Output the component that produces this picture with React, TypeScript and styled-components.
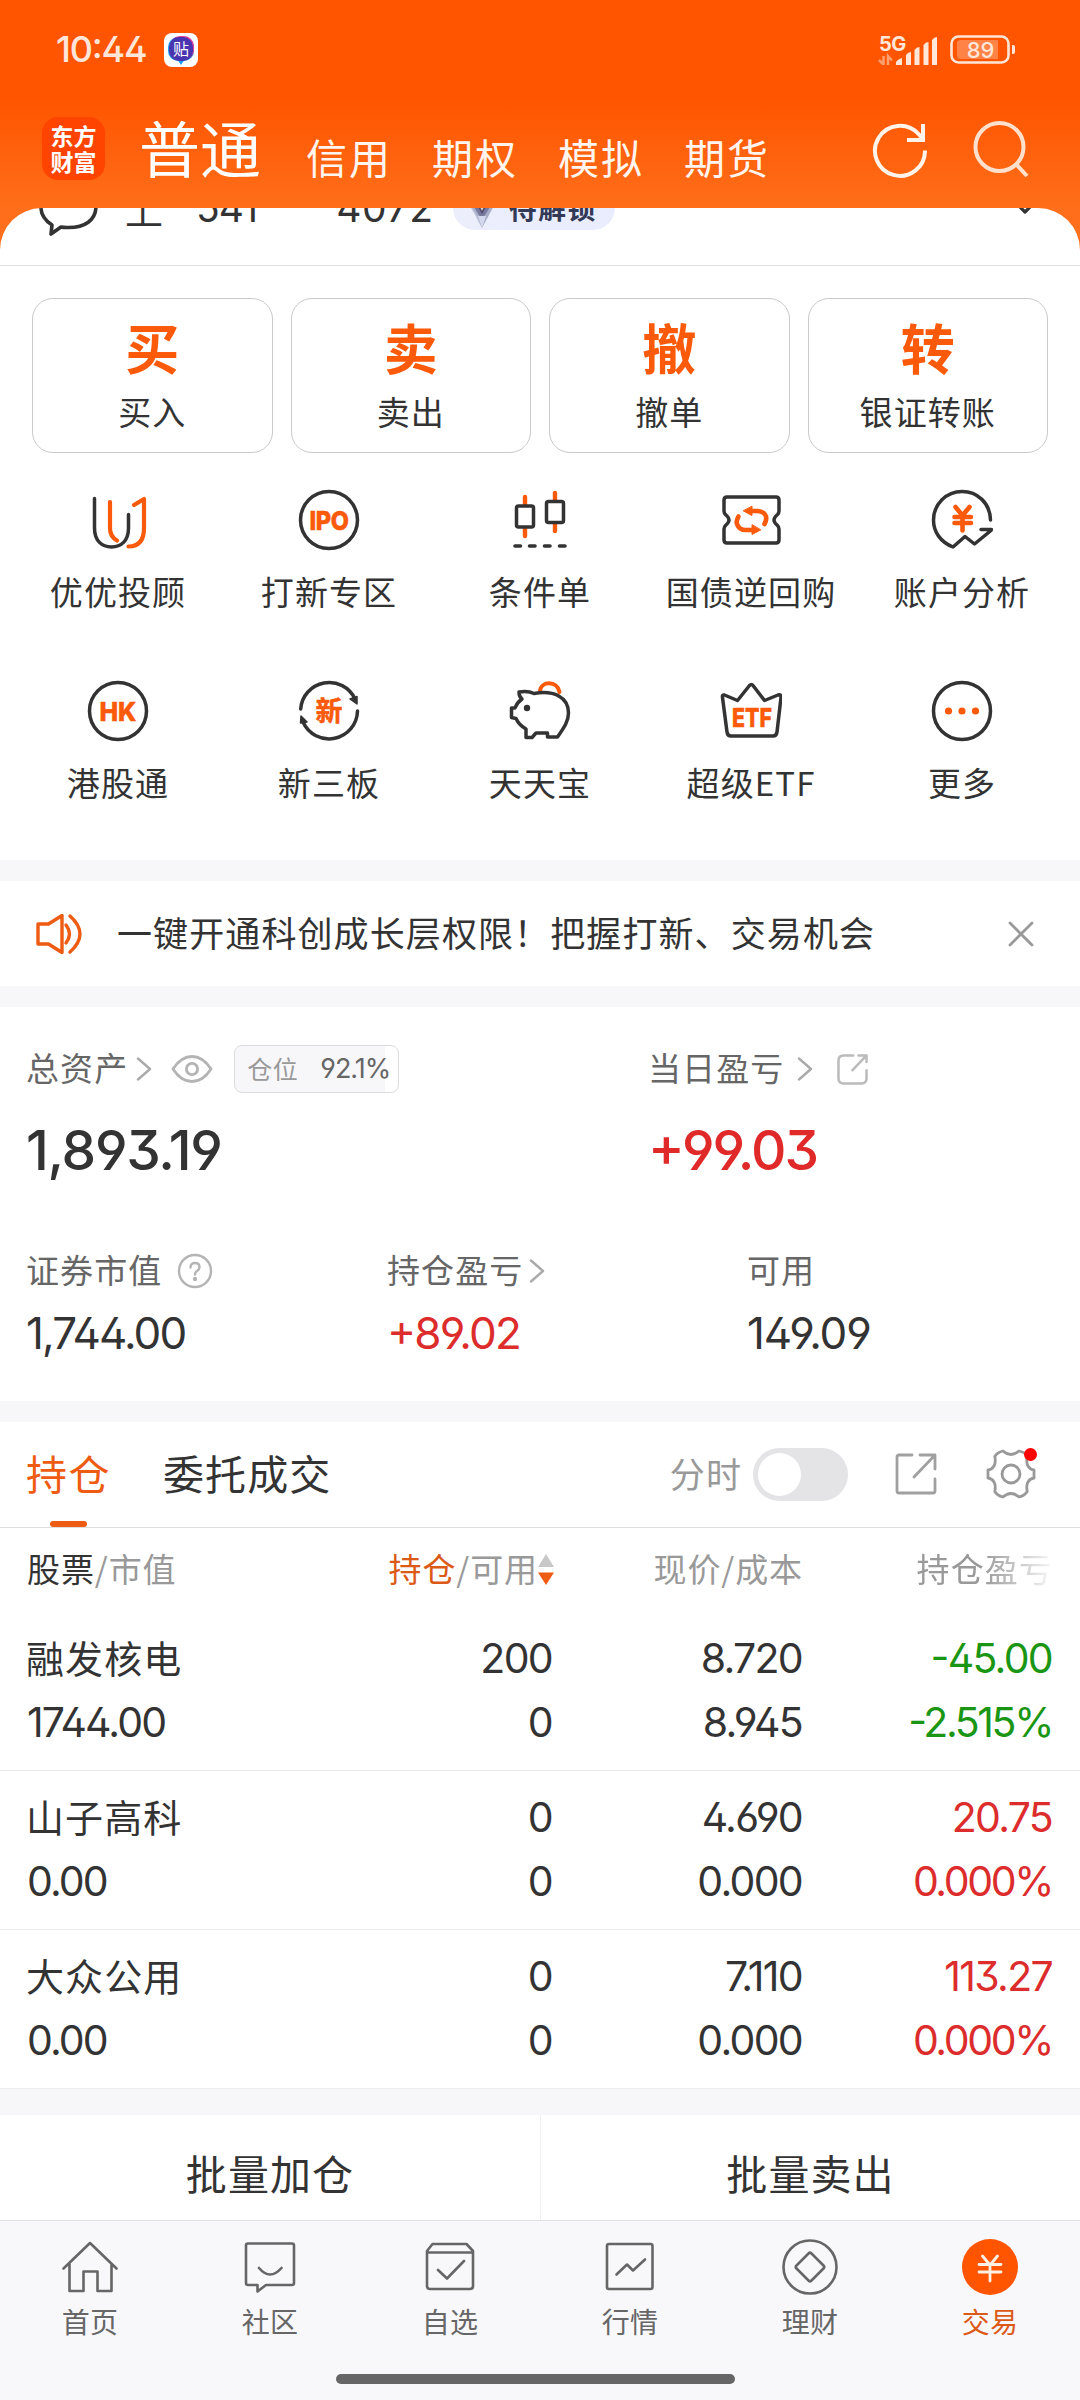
import React from "react";
import styled, { createGlobalStyle } from "styled-components";

const INK = "#333333";
const SUB = "#666666";
const MUTED = "#999999";
const ORANGE = "#fa5a0a";
const BRAND = "#ff5500";
const RED = "#dc2c2c";
const GREEN = "#1a9614";
const STRIP = "#f7f7fa";

const cjk = `"Noto Sans CJK SC", sans-serif`;
const num = `Inter, "Noto Sans CJK SC", sans-serif`;

const Global = createGlobalStyle`
  * { box-sizing: border-box; }
  body { margin: 0; background: #fff; font-family: ${cjk}; color: ${INK}; }
  svg { display: block; flex: none; }
`;

const Screen = styled.div`
  width: 1080px;
  height: 2400px;
  overflow: hidden;
  display: flex;
  flex-direction: column;
  background: #fff;
`;

/* ---------- text primitives ---------- */

const Text = styled.span<{ $size?: number; $color?: string; $weight?: number; $track?: number }>`
  display: block;
  font-family: ${cjk};
  font-size: ${(p) => p.$size ?? 33}px;
  line-height: 1.2;
  font-weight: ${(p) => p.$weight ?? 400};
  letter-spacing: ${(p) => p.$track ?? 1.1}px;
  color: ${(p) => p.$color ?? INK};
  white-space: nowrap;
`;

const Num = styled.span<{ $size?: number; $color?: string; $weight?: number; $track?: number }>`
  display: block;
  font-family: ${num};
  font-feature-settings: "ss01", "cv09", "case";
  font-size: ${(p) => p.$size ?? 41}px;
  line-height: 1.2;
  font-weight: ${(p) => p.$weight ?? 400};
  letter-spacing: ${(p) => p.$track ?? -1.7}px;
  color: ${(p) => p.$color ?? INK};
  white-space: nowrap;
`;

/* ---------- header ---------- */

const Header = styled.header`
  height: 250px;
  flex: none;
  background: linear-gradient(180deg, ${BRAND} 0, ${BRAND} 100px, #ff6e1a 208px, #ff6e1a 250px);
`;

const StatusBar = styled.div`
  height: 100px;
  padding: 0 64px 0 56px;
  display: flex;
  align-items: center;
  justify-content: space-between;
`;

const Cluster = styled.div<{ $gap?: number }>`
  display: flex;
  align-items: center;
  gap: ${(p) => p.$gap ?? 0}px;
`;

const TitleBar = styled.nav`
  height: 108px;
  padding: 0 50px 0 42px;
  display: flex;
  align-items: flex-start;
`;

const Logo = styled.div`
  margin-top: 17px;
  width: 63px;
  height: 63px;
  border-radius: 16px;
  background: #ff4400;
  color: #fff;
  display: flex;
  flex-direction: column;
  align-items: center;
  justify-content: center;
  font-family: "Noto Sans CJK SC", sans-serif;
  font-weight: 700;
  font-size: 23px;
  line-height: 26px;
  padding-bottom: 2px;
`;

const MainTitle = styled(Text)`
  margin: 7px 0 0 34px;
  line-height: 80px;
`;

const Tabs = styled.div`
  display: flex;
  gap: 40px;
  margin: 32px 0 0 45px;
  line-height: 50px;
`;

const HeaderIcons = styled.div`
  display: flex;
  gap: 43px;
  margin: 21px 0 0 auto;
`;

/* ---------- sheet ---------- */

const Sheet = styled.main`
  position: relative;
  margin-top: -42px;
  background: #fff;
  border-radius: 42px 42px 0 0;
  overflow: hidden;
  flex: none;
`;

const PeekClip = styled.div`
  height: 58px;
  overflow: hidden;
  display: flex;
  align-items: flex-end;
  border-bottom: 1px solid #e2e2e4;
`;

const PeekRow = styled.div`
  height: 114px;
  width: 100%;
  flex: none;
  padding: 0 42px 0 39px;
  display: flex;
  align-items: center;
`;

const Badge = styled.div`
  margin-left: 19px;
  width: 162px;
  height: 44px;
  border-radius: 22px;
  background: linear-gradient(90deg, #eceefb, #e9edff);
  display: flex;
  align-items: center;
  gap: 9px;
  padding-left: 11px;
`;

const Push = styled.div`
  margin-left: auto;
`;

const Cards = styled.section`
  display: grid;
  grid-template-columns: repeat(4, 1fr);
  gap: 18px;
  padding: 32px 32px 0;
`;

const Card = styled.div`
  height: 155px;
  border: 1px solid #cacacc;
  border-radius: 21px;
  display: flex;
  flex-direction: column;
  align-items: center;
  padding-top: 17px;
`;

const CardGlyph = styled(Text)`
  line-height: 62px;
`;

const CardLabel = styled(Text)`
  line-height: 40px;
  margin-top: 13px;
`;

const Features = styled.section`
  display: grid;
  grid-template-columns: repeat(5, 211px);
  justify-content: center;
  row-gap: 69px;
  padding: 36px 0 58px;
`;

const Feature = styled.div`
  display: flex;
  flex-direction: column;
  align-items: center;
  gap: 20px;
`;

const FeatureLabel = styled(Text)`
  line-height: 40px;
`;

const Strip = styled.div<{ $h?: number }>`
  height: ${(p) => p.$h ?? 21}px;
  background: ${STRIP};
  flex: none;
`;

const Notice = styled.section`
  height: 105px;
  display: flex;
  align-items: center;
  padding: 0 46px 0 35px;
`;

const NoticeText = styled(Text)`
  margin: -4px auto 0 34px;
`;

/* ---------- assets ---------- */

const Assets = styled.section`
  height: 394px;
  padding: 37px 26px 0;
`;

const AssetsTop = styled.div`
  display: grid;
  grid-template-columns: 622px 1fr;
`;

const AssetsBottom = styled.div`
  display: grid;
  grid-template-columns: 361px 360px 1fr;
  margin-top: 63px;
`;

const LabelRow = styled.div<{ $h: number }>`
  height: ${(p) => p.$h}px;
  display: flex;
  align-items: center;
`;

const Label = styled(Text)`
  margin-top: -3px;
`;

const Gap = styled.i<{ $w: number }>`
  width: ${(p) => p.$w}px;
  flex: none;
`;

const Position = styled.div`
  width: 165px;
  height: 48px;
  border: 1px solid #dcdcde;
  border-radius: 8px;
  background: linear-gradient(90deg, ${STRIP} 92.1%, #fff 92.1%);
  display: flex;
  align-items: center;
  justify-content: space-between;
  padding: 0 8px 0 12px;
`;

const BigValue = styled(Num)`
  line-height: 66px;
  margin-top: 23px;
`;

const Value = styled(Num)`
  line-height: 54px;
  margin-top: 10px;
`;

/* ---------- holdings ---------- */

const HoldingTabs = styled.section`
  height: 106px;
  border-bottom: 1px solid #dedee0;
  padding: 0 44px 0 26px;
  display: flex;
  align-items: stretch;
`;

const HoldingTab = styled.div`
  display: flex;
  flex-direction: column;
  align-items: center;
  padding-top: 22px;
  line-height: 56px;
  margin-right: 52px;
`;

const TabText = styled(Text)`
  line-height: 56px;
`;

const Underline = styled.i`
  width: 37px;
  height: 6px;
  border-radius: 3px;
  background: #ee5b12;
  margin-top: auto;
`;

const Toggle = styled.div`
  width: 95px;
  height: 53px;
  border-radius: 27px;
  background: #e4e4e7;
  padding: 5px;
  margin-left: 11px;
  flex: none;
`;

const Knob = styled.div`
  width: 43px;
  height: 43px;
  border-radius: 50%;
  background: #fff;
`;

const GearBox = styled.div`
  position: relative;
  margin-left: 49px;
`;

const RedDot = styled.i`
  position: absolute;
  right: -1px;
  top: -1px;
  width: 13px;
  height: 13px;
  border-radius: 50%;
  background: #ff0000;
`;

const TableHead = styled.div`
  height: 84px;
  display: grid;
  grid-template-columns: 275px 250px 250px 250px;
  padding-left: 27px;
  align-items: center;
`;

const HeadCell = styled.div<{ $end?: boolean; $fade?: boolean; $out?: number }>`
  display: flex;
  align-items: center;
  justify-content: ${(p) => (p.$end ? "flex-end" : "flex-start")};
  margin-right: ${(p) => -(p.$out ?? 0)}px;
  ${(p) => p.$fade && "mask-image: linear-gradient(90deg, #000 72%, transparent 102%);"}
`;

const HeadText = styled(Text)`
  margin-top: -3px;
  & > em { font-style: normal; color: ${MUTED}; }
`;

const Row = styled.div`
  height: 159px;
  border-bottom: 1px solid #ececee;
  display: grid;
  grid-template-columns: 275px 250px 250px 250px;
  grid-template-rows: 64px 64px;
  padding: 15px 0 0 27px;
  align-items: center;
`;

const RowName = styled(Text)`
  margin: -5px 0 0 -1px;
`;

const Cell = styled(Num)`
  text-align: right;
`;

const Actions = styled.section`
  height: 105px;
  display: grid;
  grid-template-columns: 1fr 1fr;
`;

const Action = styled.div`
  display: flex;
  justify-content: center;
  padding-top: 33px;
  & + & { border-left: 1px solid #f0f0f2; }
`;

/* ---------- bottom nav ---------- */

const BottomNav = styled.footer`
  height: 184px;
  border-top: 1px solid #e0e0e2;
  background: #f8f8fb;
  display: flex;
  flex-direction: column;
  align-items: center;
`;

const NavItems = styled.div`
  width: 1080px;
  height: 153px;
  display: grid;
  grid-template-columns: repeat(6, 1fr);
`;

const NavItem = styled.div`
  display: flex;
  flex-direction: column;
  align-items: center;
  padding-top: 16px;
`;

const NavLabel = styled(Text)`
  line-height: 36px;
  margin-top: 6px;
`;

const HomeBar = styled.i`
  width: 399px;
  height: 10px;
  border-radius: 5px;
  background: #666;
  margin-right: 9px;
`;

/* ---------- icons ---------- */

const line = { fill: "none", strokeLinecap: "round", strokeLinejoin: "round" } as const;
const D = "#333";

const StatusApp = () => (
  <svg width="34" height="34" viewBox="0 0 34 34">
    <rect width="34" height="34" rx="8" fill="#fff" />
    <path d="M13 26l4 6 4-6z" fill="#18a0f0" />
    <rect x="4" y="4" width="26" height="24" rx="10" fill="#22a4f2" />
    <rect x="6" y="3" width="24" height="24" rx="10" fill="#e03c9a" />
    <rect x="5" y="4" width="24" height="24" rx="10" fill="#4a35b0" />
    <text x="17" y="22" fontSize="16" textAnchor="middle" fill="#fff" fontFamily={cjk}>贴</text>
  </svg>
);

const Signal = () => (
  <svg width="60" height="32" viewBox="0 0 60 32" overflow="visible">
    <text x="0" y="17" fontSize="20" fontWeight="700" letterSpacing="-0.5" fill="#ffe6d8" fontFamily="Inter, sans-serif">5G</text>
    <g fill="#ffe6d8">
      <path d="M17 31v-3q2-3 6-4v7zM27 31V21q2-3 5-3v13zM35.500 31V16q2-3 5-3v18zM44.500 31V11q2-3 5-3v23zM53 31V6q2-3 5-3v28z" />
    </g>
    <g stroke="#ffa070" strokeWidth="2.500" fill="none">
      <path d="M4.500 22v9M0 26l4.500 4.500M9 31v-9l4 4.500" />
    </g>
  </svg>
);

const Battery = () => (
  <svg width="66" height="30" viewBox="0 0 66 30">
    <rect x="1.500" y="1.500" width="57" height="26" rx="7" fill="none" stroke="#ffe6d8" strokeWidth="2.600" />
    <path d="M7 8q0-3 3-3h38v19H10q-3 0-3-3z" fill="#ff8347" />
    <path d="M62 10h1q2 0 2 2v5q0 2-2 2h-1z" fill="#ffe6d8" />
    <text x="30.500" y="22.500" fontSize="22" fontWeight="500" textAnchor="middle" fill="#ffe6d8" fontFamily="Inter, sans-serif">89</text>
  </svg>
);

const Refresh = () => (
  <svg width="58" height="58" viewBox="0 0 58 58" fill="none" stroke="#fff3ea" strokeWidth="4">
    <path d="M54 29.500A25 25 0 1 1 47.500 13L52 18" />
    <path d="M52 3v16H36" />
  </svg>
);

const Search = () => (
  <svg width="58" height="58" viewBox="0 0 58 58" fill="none" stroke="#ffe0cc" strokeWidth="4">
    <circle cx="27.500" cy="26" r="24" />
    <path d="M44 43l11 12" />
  </svg>
);

const Bubble = () => (
  <svg width="60" height="58" viewBox="0 0 60 58" {...line} stroke={D} strokeWidth="3.600">
    <path d="M13 46C5 41 1.800 34 1.800 27 1.800 13 14 3 29.500 3S57 13 57 27 46 49 28 48.500q-4 0-6-.5l-10 7z" />
  </svg>
);

const Gem = () => (
  <svg width="36" height="40" viewBox="0 0 36 40">
    <path d="M3 12L18 2l15 10-15 28z" fill="#a8adc8" />
    <path d="M7 14h22L18 32z" fill="#77799c" />
    <path d="M11 13h14l-7 13z" fill="#4b4668" />
    <path d="M14 15h8l-4 8z" fill="#d9cfc6" />
    <path d="M3 12l15 28-5-12z" fill="#c9cfe6" />
    <path d="M14 28h8l-4 12z" fill="#d3d8ee" />
  </svg>
);

const Chevron = ({ down }: { down?: boolean }) =>
  down ? (
    <svg width="26" height="18" viewBox="0 0 26 18" {...line} stroke={D} strokeWidth="3.200">
      <path d="M2 2l11 11L24 2" />
    </svg>
  ) : (
    <svg width="16" height="24" viewBox="0 0 16 24" {...line} stroke="#aaa" strokeWidth="2.400">
      <path d="M2 1.500L14 12 2 22.500" />
    </svg>
  );

const Icon = ({ children }: { children: React.ReactNode }) => (
  <svg width="62" height="62" viewBox="-1 -1 62 62" {...line} strokeWidth="3.500">{children}</svg>
);

const iconText = {
  textAnchor: "middle" as const,
  fill: ORANGE,
  stroke: ORANGE,
  strokeWidth: 0.5,
  fontWeight: 800,
  fontFamily: num,
};

const icons: Record<string, React.ReactNode> = {
  uu: (
    <Icon>
      <path stroke={D} d="M6.500 8.500V38c0 13 7.500 19 17 19s17-6 17-19V24.500" />
      <path stroke={ORANGE} strokeWidth="4.200" d="M22 12v26c0 6 2.500 10 7 12.500" />
      <path stroke={ORANGE} strokeWidth="4.200" d="M46 15l10-6v29c0 12-5 18.500-15.500 18.500" />
    </Icon>
  ),
  ipo: (
    <Icon>
      <circle cx="30" cy="30" r="28.500" stroke={D} />
      <text {...iconText} x="30" y="39.500" fontSize="26" letterSpacing="-0.5" textLength="39" lengthAdjust="spacingAndGlyphs">IPO</text>
    </Icon>
  ),
  cond: (
    <Icon>
      <g stroke={ORANGE} strokeWidth="4.400">
        <path d="M15 7v8M15 38v8M45 3v7M45 34v7" />
      </g>
      <rect x="6.500" y="16" width="17" height="21" rx="2" stroke={D} />
      <rect x="36.500" y="11.500" width="17" height="21" rx="2" stroke={D} />
      <path stroke={D} strokeWidth="3.600" d="M5 56h5.500M19.500 56H25M34.500 56H40M49.500 56H55" />
    </Icon>
  ),
  repo: (
    <Icon>
      <path stroke={D} d="M6 7h49q3 0 3 3v11q0 2-1.500 3.500-3.500 3-3.500 5.500t3.500 5.500Q58 37 58 39v11q0 3-3 3H6q-3 0-3-3V39q0-2 1.500-3.500Q8 32.500 8 30t-3.500-5.500Q3 23 3 21V10q0-3 3-3z" />
      <g stroke={ORANGE} strokeWidth="4.600">
        <path d="M17.500 26.500C13 34 18 40 24.500 40H32" />
        <path d="M43.500 34C48 26 43 21 36 21h-7" />
      </g>
      <g fill={ORANGE} stroke={ORANGE} strokeWidth="1">
        <path d="M31 35v9.500l8.500-4.500z" />
        <path d="M31 16.500v9l-8.500-4.500z" />
      </g>
    </Icon>
  ),
  yuan: (
    <Icon>
      <path stroke={D} d="M58.500 30C58 13 45.500 1.500 30 1.500S1.500 14 1.500 30c0 12 7 22 19.500 27L33 46.500l9.500 7.500L59 40.500l.5-1H49" />
      <path stroke={ORANGE} strokeWidth="4.600" d="M23.500 17L30.500 25.500 37.500 17M30.500 26v14.500M22.500 27h16.500M22.500 33h16.500" />
    </Icon>
  ),
  hk: (
    <Icon>
      <circle cx="30" cy="30" r="28.500" stroke={D} />
      <text {...iconText} x="30" y="39.500" fontSize="26" textLength="37" lengthAdjust="spacingAndGlyphs">HK</text>
    </Icon>
  ),
  xin: (
    <Icon>
      <path stroke={D} d="M1.700 28A28.500 28.500 0 0 1 56 18M58.500 30A28.500 28.500 0 0 1 4 41" />
      <path fill={D} stroke={D} strokeWidth="1.500" d="M51 18l7-2.500V23zM1.500 42l.5-7 6 6z" />
      <text {...iconText} x="30" y="40" fontSize="27" fontWeight="700" fontFamily={cjk}>新</text>
    </Icon>
  ),
  pig: (
    <Icon>
      <path stroke={ORANGE} strokeWidth="4" d="M30 10C31 0 47-1 49.500 11" />
      <path stroke={D} d="M9 11q9-1.500 15 1.500C44 9 58.500 16 58.500 32c0 8-4 14-11 24H37.500v-4H26l-4 4.500h-6V48Q9 44 6 37.500l-4.500-1V27H5q2-5.500 7-9Q9 16 9 11z" />
      <circle cx="17" cy="27" r="3.200" fill={D} />
    </Icon>
  ),
  etf: (
    <Icon>
      <path stroke={D} d="M3.500 14L16.500 19.500 28.500 4.500Q30.500 2.500 32 4.500L43.500 19.500 57 14Q60.500 13 60 16.500L56 51q-.5 4-4 4H10q-3.500 0-4-4L1.500 16.500Q1 13.500 3.500 14z" />
      <text {...iconText} x="31" y="46" fontSize="26" textLength="40" lengthAdjust="spacingAndGlyphs">ETF</text>
    </Icon>
  ),
  more: (
    <Icon>
      <circle cx="30" cy="30" r="28.500" stroke={D} />
      <g fill={ORANGE}>
        <circle cx="16.500" cy="30" r="3.600" />
        <circle cx="30" cy="30" r="3.600" />
        <circle cx="43.500" cy="30" r="3.600" />
      </g>
    </Icon>
  ),
};

const Speaker = () => (
  <svg width="48" height="42" viewBox="0 0 48 42" {...line} stroke="#ee5b12" strokeWidth="3.400">
    <path d="M3 11h10.500L27 2.500v37L13.500 31H3zM31 12q7 9 0 18M35 3q20 18 0 36" />
  </svg>
);

const Close = () => (
  <svg width="26" height="26" viewBox="0 0 26 26" {...line} stroke="#999" strokeWidth="2.800">
    <path d="M2 2l22 22M24 2L2 24" />
  </svg>
);

const Eye = () => (
  <svg width="42" height="28" viewBox="0 0 42 28" {...line} stroke="#b4b4b4" strokeWidth="2.800">
    <path d="M2 14Q10 1.500 21 1.500T40 14Q32 26.500 21 26.500T2 14z" />
    <circle cx="21" cy="14" r="5.600" />
  </svg>
);

const Share = ({ size, soft }: { size: number; soft?: boolean }) => (
  <svg width={size} height={size} viewBox="0 0 42 42" {...line} stroke={soft ? "#bbb" : "#a0a0a0"} strokeWidth={soft ? 3.4 : 2.8}>
    {soft ? (
      <path d="M22 2H9Q2 2 2 9v24q0 7 7 7h24q7 0 7-7V22M29 2h11v9M40 2L21 22" />
    ) : (
      <path d="M17 2H4Q2 2 2 4v34q0 2 2 2h34q2 0 2-2V26M25 2h15v14M40 2L19 24" />
    )}
  </svg>
);

const Help = () => (
  <svg width="36" height="36" viewBox="0 0 36 36" {...line} stroke="#b4b4b4" strokeWidth="2.400">
    <circle cx="18" cy="18" r="16" />
    <path d="M13.500 14.500q0-4.500 4.500-4.500t4.500 4.200q0 2.300-2.500 3.800-2 1.300-2 3.500" />
    <circle cx="18" cy="26" r="1" fill="#b4b4b4" />
  </svg>
);

const Gear = () => (
  <svg width="50" height="50" viewBox="0 0 50 50" {...line} stroke="#999" strokeWidth="2.800">
    <path d="M17 2Q21 5.500 25 5.500T33 2Q39.500 3.500 41.200 7 40 13.500 42 17t6 4v8q-4 .5-6 4t-.800 9.500Q39 46.500 33 48q-4-3.500-8-3.500T17 48q-6-1.500-8.200-5.500Q10 36.500 8 33T2 29v-8q4-.5 6-4t.8-9.500Q11 3.500 17 2z" />
    <circle cx="25" cy="25" r="9" />
  </svg>
);

const Sort = () => (
  <svg width="16" height="32" viewBox="0 0 16 32">
    <path d="M8 0l8 13H0z" fill="#c8c8c8" />
    <path d="M8 31l8-12.500H0z" fill="#ee5b12" />
  </svg>
);

const Nav = ({ children }: { children: React.ReactNode }) => (
  <svg width="60" height="60" viewBox="0 0 60 60" {...line} stroke="#666" strokeWidth="2.600">{children}</svg>
);

const navIcons: Record<string, React.ReactNode> = {
  首页: (
    <Nav>
      <path d="M3.500 31.500L30 6l26.500 25.500M9.500 27v27h14V34.500h14V54h14V27" />
    </Nav>
  ),
  社区: (
    <Nav>
      <path d="M8 6.500h44q2 0 2 2V46q0 2-2 2H26l-8.500 6.500V48H8q-2 0-2-2V8.500q0-2 2-2zM19 31q11 13 22.500 0" />
    </Nav>
  ),
  自选: (
    <Nav>
      <path d="M12.500 7h34L53 14v35q0 3-3 3H10q-3 0-3-3V14zM7.500 15.500h45M18 33l9 8.500L44 24" />
    </Nav>
  ),
  行情: (
    <Nav>
      <rect x="7" y="7" width="45.500" height="45" rx="2" />
      <path d="M16.500 37.500L27 27.500l6 6L45 22.500" />
    </Nav>
  ),
  理财: (
    <Nav>
      <circle cx="30" cy="30" r="26.500" />
      <path d="M28.500 16.500q1.500-1.500 3 0l12 12q1.500 1.500 0 3l-12 12q-1.500 1.500-3 0l-12-12q-1.500-1.500 0-3z" />
    </Nav>
  ),
  交易: (
    <Nav>
      <circle cx="30" cy="30" r="28" fill={BRAND} stroke="none" />
      <path stroke="#fff0e6" strokeWidth="2.800" d="M22.500 19L30 28l7.500-9M30 28v16M19 27.500h22M19 35h22" />
    </Nav>
  ),
};

/* ---------- data ---------- */

const quick = [
  ["买", "买入"],
  ["卖", "卖出"],
  ["撤", "撤单"],
  ["转", "银证转账"],
];

const features = [
  ["uu", "优优投顾"],
  ["ipo", "打新专区"],
  ["cond", "条件单"],
  ["repo", "国债逆回购"],
  ["yuan", "账户分析"],
  ["hk", "港股通"],
  ["xin", "新三板"],
  ["pig", "天天宝"],
  ["etf", "超级ETF"],
  ["more", "更多"],
];

const holdings = [
  { name: "融发核电", value: "1744.00", held: "200", free: "0", price: "8.720", cost: "8.945", gain: "-45.00", pct: "-2.515%", color: GREEN },
  { name: "山子高科", value: "0.00", held: "0", free: "0", price: "4.690", cost: "0.000", gain: "20.75", pct: "0.000%", color: RED },
  { name: "大众公用", value: "0.00", held: "0", free: "0", price: "7.110", cost: "0.000", gain: "113.27", pct: "0.000%", color: RED },
];

export default function App() {
  return (
    <Screen>
      <Global />
      <Header>
        <StatusBar>
          <Cluster $gap={18}>
            <Num $size={36} $color="#ffe6d8" $track={-1.2} $weight={500}>10:44</Num>
            <StatusApp />
          </Cluster>
          <Cluster $gap={11}>
            <Signal />
            <Battery />
          </Cluster>
        </StatusBar>
        <TitleBar>
          <Logo>
            <span>东方</span>
            <span>财富</span>
          </Logo>
          <MainTitle $size={61} $color="#fff" $track={0}>普通</MainTitle>
          <Tabs>
            {["信用", "期权", "模拟", "期货"].map((t) => (
              <Text key={t} $size={41} $color="#fff5ee" $track={2}>{t}</Text>
            ))}
          </Tabs>
          <HeaderIcons>
            <Refresh />
            <Search />
          </HeaderIcons>
        </TitleBar>
      </Header>

      <Sheet>
        <PeekClip>
          <PeekRow>
            <Bubble />
            <Gap $w={26} />
            <Text $size={38}>上</Text>
            <Gap $w={32} />
            <Num $size={39} $track={-1}>541</Num>
            <Gap $w={79} />
            <Num $size={39} $track={0.7}>4072</Num>
            <Badge>
              <Gem />
              <Text $size={28} $weight={700} $color="#333a58" $track={1.2}>待解锁</Text>
            </Badge>
            <Push>
              <Chevron down />
            </Push>
          </PeekRow>
        </PeekClip>

        <Cards>
          {quick.map(([g, l]) => (
            <Card key={l}>
              <CardGlyph $size={54} $weight={700} $color={ORANGE} $track={0}>{g}</CardGlyph>
              <CardLabel>{l}</CardLabel>
            </Card>
          ))}
        </Cards>

        <Features>
          {features.map(([k, l]) => (
            <Feature key={k}>
              {icons[k]}
              <FeatureLabel>{l}</FeatureLabel>
            </Feature>
          ))}
        </Features>

        <Strip />
        <Notice>
          <Speaker />
          <NoticeText $size={35}>一键开通科创成长层权限！把握打新、交易机会</NoticeText>
          <Close />
        </Notice>
        <Strip />

        <Assets>
          <AssetsTop>
            <div>
              <LabelRow $h={50}>
                <Label $color={SUB}>总资产</Label>
                <Gap $w={8} />
                <Chevron />
                <Gap $w={19} />
                <Eye />
                <Gap $w={21} />
                <Position>
                  <Label $size={25} $color={MUTED} $track={0.5}>仓位</Label>
                  <Num $size={27} $color={SUB} $track={-1}>92.1%</Num>
                </Position>
              </LabelRow>
              <BigValue $size={55} $weight={500} $track={-1.3}>1,893.19</BigValue>
            </div>
            <div>
              <LabelRow $h={50}>
                <Label $color={SUB}>当日盈亏</Label>
                <Gap $w={13} />
                <Chevron />
                <Gap $w={24} />
                <Share size={31} soft />
              </LabelRow>
              <BigValue $size={55} $weight={500} $track={-2} $color="#e02a2a">+99.03</BigValue>
            </div>
          </AssetsTop>
          <AssetsBottom>
            <div>
              <LabelRow $h={50}>
                <Label $color={SUB}>证券市值</Label>
                <Gap $w={15} />
                <Help />
              </LabelRow>
              <Value $size={44} $track={-1.9}>1,744.00</Value>
            </div>
            <div>
              <LabelRow $h={50}>
                <Label $color={SUB}>持仓盈亏</Label>
                <Gap $w={6} />
                <Chevron />
              </LabelRow>
              <Value $size={44} $track={-1.8} $color={RED}>+89.02</Value>
            </div>
            <div>
              <LabelRow $h={50}>
                <Label $color={SUB}>可用</Label>
              </LabelRow>
              <Value $size={44} $track={-1.2}>149.09</Value>
            </div>
          </AssetsBottom>
        </Assets>
        <Strip />

        <HoldingTabs>
          <HoldingTab>
            <TabText $size={41} $color="#ee5b12" $track={1.5}>持仓</TabText>
            <Underline />
          </HoldingTab>
          <HoldingTab>
            <TabText $size={41} $track={1.1}>委托成交</TabText>
          </HoldingTab>
          <Push>
            <LabelRow $h={104}>
              <Label $size={35} $color={MUTED}>分时</Label>
              <Toggle>
                <Knob />
              </Toggle>
              <Gap $w={47} />
              <Share size={42} />
              <GearBox>
                <Gear />
                <RedDot />
              </GearBox>
            </LabelRow>
          </Push>
        </HoldingTabs>

        <TableHead>
          <HeadCell>
            <HeadText $track={0.9}>股票<em>/市值</em></HeadText>
          </HeadCell>
          <HeadCell $end $out={2}>
            <HeadText $color="#dc5a18" $track={0.9}>持仓<em>/可用</em></HeadText>
            <Sort />
          </HeadCell>
          <HeadCell $end $out={1}>
            <HeadText $color={MUTED} $track={0.9}>现价/成本</HeadText>
          </HeadCell>
          <HeadCell $end $fade $out={1}>
            <HeadText $color={MUTED}>持仓盈亏</HeadText>
          </HeadCell>
        </TableHead>

        {holdings.map((h) => (
          <Row key={h.name}>
            <RowName $size={38}>{h.name}</RowName>
            <Cell>{h.held}</Cell>
            <Cell>{h.price}</Cell>
            <Cell $color={h.color}>{h.gain}</Cell>
            <Num $track={-1.9}>{h.value}</Num>
            <Cell>{h.free}</Cell>
            <Cell>{h.cost}</Cell>
            <Cell $color={h.color} $track={-2.4}>{h.pct}</Cell>
          </Row>
        ))}

        <Strip $h={26} />
        <Actions>
          <Action>
            <Text $size={41}>批量加仓</Text>
          </Action>
          <Action>
            <Text $size={41}>批量卖出</Text>
          </Action>
        </Actions>

        <BottomNav>
          <NavItems>
            {Object.keys(navIcons).map((k) => (
              <NavItem key={k}>
                {navIcons[k]}
                <NavLabel $size={28} $track={0.3} $color={k === "交易" ? "#dc5a18" : SUB}>{k}</NavLabel>
              </NavItem>
            ))}
          </NavItems>
          <HomeBar />
        </BottomNav>
      </Sheet>
    </Screen>
  );
}
